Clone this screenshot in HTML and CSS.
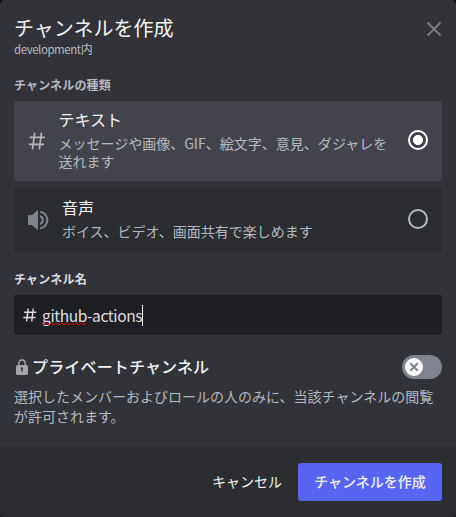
FILE: index.html
```html
<!DOCTYPE html>
<html lang="ja">
<head>
<meta charset="utf-8">
<title>チャンネルを作成</title>
<link rel="stylesheet" href="styles.css">
</head>
<body>
<main class="modal">
  <header class="header">
    <div>
      <h1 class="title">チャンネルを作成</h1>
      <p class="subtitle"><span class="server">development</span>内</p>
    </div>
    <svg class="close" width="16" height="16" viewBox="0 0 16 16"><path d="M1.5 1.5 14.5 14.5M14.5 1.5 1.5 14.5" stroke="currentColor" stroke-width="2"/></svg>
  </header>
  <h2 class="label label-type">チャンネルの種類</h2>
  <div class="options">
    <div class="option selected">
      <svg class="icon-hash" width="18" height="18" viewBox="0 0 18 18"><path d="M6.7 .7 4.5 17.3M13.5 .7 11.3 17.3M1.8 5.4H17M.8 12.4H16" fill="none" stroke="currentColor" stroke-width="1.7"/></svg>
      <div class="option-text">
        <div class="option-title">テキスト</div>
        <div class="option-desc">メッセージや画像、GIF、絵文字、意見、ダジャレを送れます</div>
      </div>
      <span class="radio"></span>
    </div>
    <div class="option">
      <svg class="icon-sound" width="21" height="20" viewBox="0 0 21 20"><path d="M0 5.2H4L9 .4Q10 0 10 1V19Q10 20 9 19.6L4 15H0Z" fill="currentColor"/><path d="M12.2 6.2A4.2 4.2 0 0 1 12.2 14M12.2 1.7A8.5 8.5 0 0 1 12.2 18.5" fill="none" stroke="currentColor" stroke-width="2"/></svg>
      <div class="option-text">
        <div class="option-title">音声</div>
        <div class="option-desc">ボイス、ビデオ、画面共有で楽しめます</div>
      </div>
      <span class="radio"></span>
    </div>
  </div>
  <h2 class="label label-name">チャンネル名</h2>
  <div class="input">
    <svg class="input-hash" width="14" height="14" viewBox="0 0 14 14"><path d="M5.2 .7 3.6 13.3M10.3 .7 8.7 13.3M1.2 4.3H13.3M.4 9.5H12.5" fill="none" stroke="currentColor" stroke-width="1.4"/></svg>
    <span class="name"><span class="misspelled">github<svg class="squiggle" width="44" height="4" viewBox="0 0 44 4"><path d="M0 .7 2 3 4.5 .8 7 3 9.5 .8 12 3 14.5 .8 17 3 19.5 .8 22 3 24.5 .8 27 3 29.5 .8 32 3 34.5 .8 37 3 39.5 .8 42 3 44 1" fill="none" stroke="#e0080c"/></svg></span>-actions</span><span class="caret"></span>
  </div>
  <div class="private">
    <svg class="lock" width="12" height="16" viewBox="0 0 12 16"><path d="M2.8 7V4.2a3.2 3.2 0 0 1 6.4 0V7" fill="none" stroke="currentColor" stroke-width="1.4"/><rect y="6" width="12" height="10" rx="1.6" fill="currentColor"/><path d="M6 8.3a1.2 1.2 0 0 1 .6 2.2V12.8H5.4V10.5A1.2 1.2 0 0 1 6 8.3Z" fill="#313338"/></svg>
    <span class="private-title">プライベートチャンネル</span>
    <span class="switch"><span class="knob"><svg width="10" height="10" viewBox="0 0 10 10"><path d="M1.2 1.2 8.8 8.8M8.8 1.2 1.2 8.8" stroke="#80848e" stroke-width="2.1"/></svg></span></span>
  </div>
  <p class="private-desc">選択したメンバーおよびロールの人のみに、当該チャンネルの閲覧が許可されます。</p>
  <footer class="footer">
    <span class="cancel">キャンセル</span>
    <span class="submit">チャンネルを作成</span>
  </footer>
</main>
</body>
</html>
```
FILE: styles.css
```css
* { box-sizing: border-box; }
body {
  margin: 0;
  background: #17171a;
  font-family: "Noto Sans CJK JP", sans-serif;
  color: #f2f3f5;
}
h1, h2, p { margin: 0; }
svg { flex: none; display: block; }
.modal {
  height: 517px;
  display: flex;
  flex-direction: column;
  background: #313338;
  border-radius: 5px;
  overflow: hidden;
}
.header {
  display: flex;
  justify-content: space-between;
  height: 56px;
  padding: 16px 14px 0;
}
.title { font-size: 20px; line-height: 24px; font-weight: 400; }
.subtitle { margin-top: 1px; font-size: 12px; line-height: 16px; color: #b5bac1; }
.server { font-size: 11.5px; letter-spacing: -.45px; }
.close { margin: 5px 0 0; color: #777a80; }
.label { margin: 0 14px; font-size: 12px; line-height: 16px; font-weight: 700; color: #b5bac1; }
.label-type { margin-top: 21px; letter-spacing: .15px; }
.label-name { margin-top: 20px; color: #dbdee1; letter-spacing: .2px; }
.options { margin: 8px 14px 0; display: flex; flex-direction: column; gap: 8px; }
.option {
  display: flex;
  align-items: center;
  height: 62px;
  padding: 0 14px 2px;
  border-radius: 3px;
  background: #2b2d31;
}
.option.selected { height: 80px; background: #43444b; }
.icon-hash { margin-top: 2px; color: #b5b7bb; }
.icon-sound { margin-top: 2px; color: #80848e; }
.option-text { flex: 1; margin-left: 13px; }
.selected .option-text { margin-left: 12.5px; }
.option-title { font-size: 16px; line-height: 20px; margin-bottom: 5px; }
.option-desc { margin-bottom: 1px; font-size: 14px; line-height: 18px; color: #b5bac1; }
.radio {
  width: 20px;
  height: 20px;
  margin-left: 16px;
  flex: none;
  border: 2px solid #b5bac1;
  border-radius: 50%;
}
.selected .radio {
  border-color: #fff;
  background: radial-gradient(circle, #fff 4.7px, transparent 5.3px);
}
.input {
  display: flex;
  align-items: center;
  height: 40px;
  margin: 8px 14px 0;
  padding-left: 9px;
  border-radius: 3px;
  background: #1e1f22;
  color: #dbdee1;
}
.name { margin-left: 5px; font-size: 15.5px; line-height: 22px; letter-spacing: -.36px; }
.misspelled { position: relative; }
.squiggle { position: absolute; left: 0; bottom: 0; }
.caret { width: 1px; height: 21px; background: #fff; }
.private { display: flex; align-items: center; height: 24px; margin: 20px 14px 0 16px; }
.lock { color: #a5a6aa; }
.private-title {
  flex: 1;
  margin-left: 4px;
  padding-bottom: 2px;
  font-size: 16px;
  line-height: 22px;
  font-weight: 500;
  letter-spacing: .16px;
}
.switch { width: 40px; height: 24px; padding: 3px; border-radius: 12px; background: #80848e; }
.knob {
  display: flex;
  align-items: center;
  justify-content: center;
  width: 18px;
  height: 18px;
  border-radius: 50%;
  background: #fff;
}
.private-desc { margin: 7px 14px 0; font-size: 14px; line-height: 20px; color: #b5bac1; }
.footer {
  display: flex;
  align-items: center;
  justify-content: flex-end;
  gap: 16px;
  height: 70px;
  margin-top: auto;
  padding: 0 14px;
  background: #2b2d31;
  font-size: 14px;
}
.cancel { padding-bottom: 2px; }
.submit {
  width: 144px;
  height: 38px;
  border-radius: 3px;
  background: #5865f2;
  line-height: 36px;
  text-align: center;
  font-weight: 500;
}
```
